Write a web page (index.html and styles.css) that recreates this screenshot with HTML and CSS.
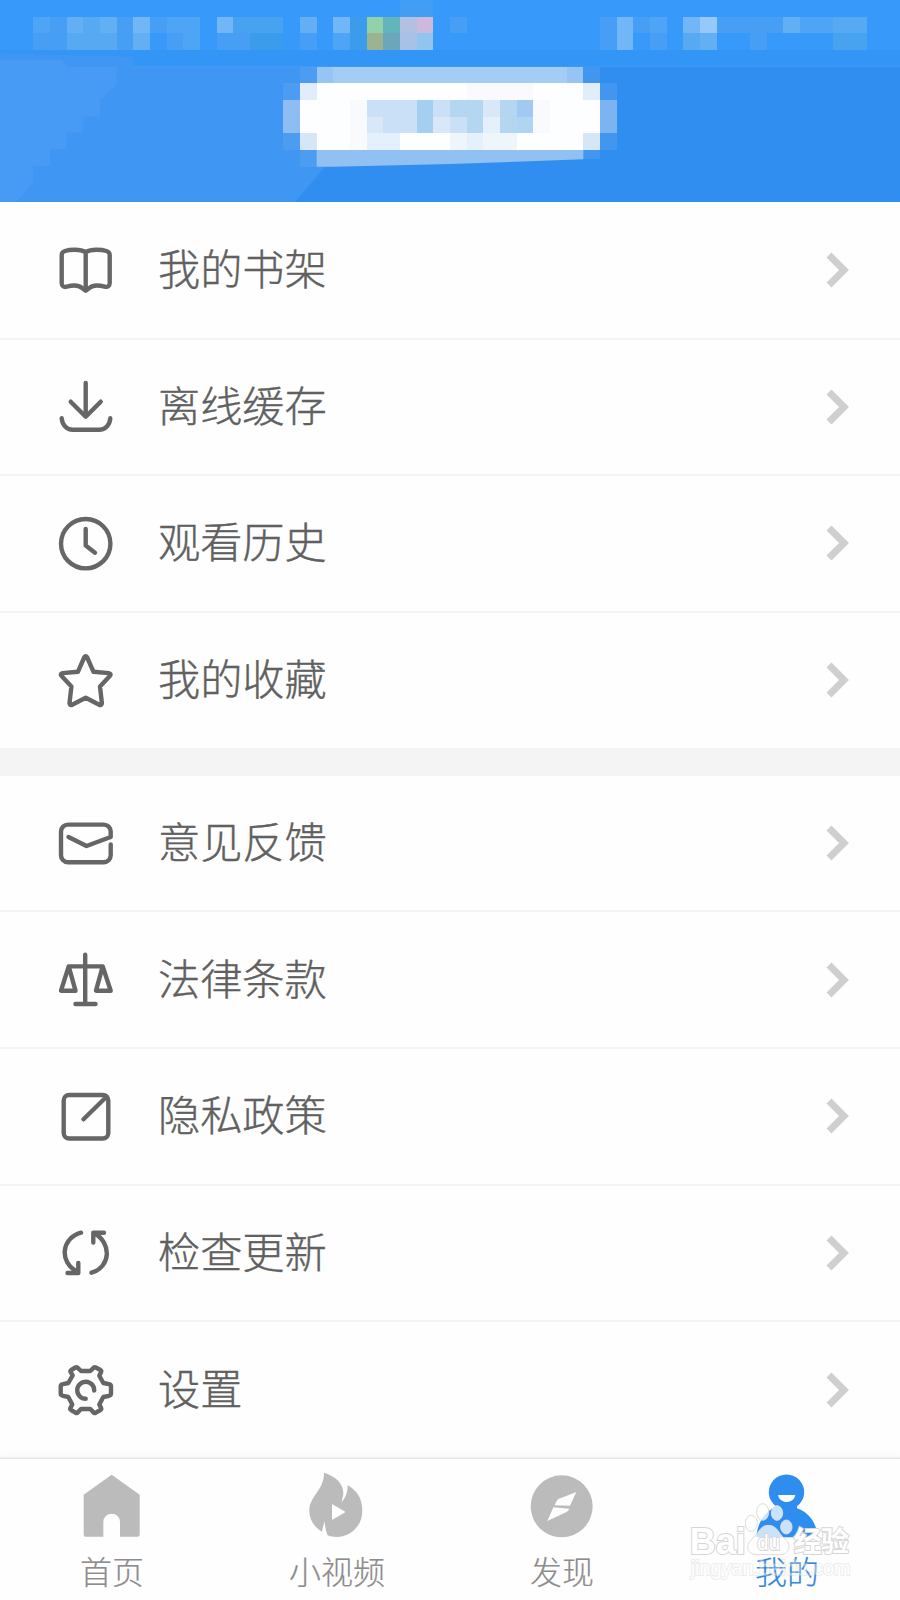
FILE: index.html
```
<!DOCTYPE html>
<html lang="zh-CN">
  <head>
    <meta charset="UTF-8" />
    <title>我的</title>
    <meta name="viewport" content="width=device-width, initial-scale=1.0" />
    <link rel="stylesheet" href="styles.css">
  </head>
  <body>
    <header class="header">
      <svg class="banner" viewBox="0 0 2700 606" preserveAspectRatio="none">
        <!-- background -->
        <path fill="#3799f9" d="M0 0h2700v200H0z" />
        <path fill="#3395f6" d="M0 150h2700v50H0z" />
        <path fill="#308ef1" d="M1000 200h1700v406H885z" />
        <path fill="#3f97f3" d="M0 160l400 10v30h600v270l-25 30-90 106H0z" />
        <path fill="#479bf4" d="M0 180h185l15 20h150v55l-50 45v50h-50v48h-50v50h-50v50h-50v45L50 606H0z" />
        <!-- status bar blocks -->
        <g shape-rendering="crispEdges">
          <path fill="#4fa5f5" d="M100 50h50v50h-50zM500 50h100v50h-100zM550 100h50v50h-50zM1000 100h50v50h-50zM1950 50h50v50h-50zM2350 50h150v50h-150z" />
          <path fill="#469ff5" d="M150 50h50v100h-100v-50h50zM350 50h50v100h-50zM450 50h50v50h50v50h-50v-50h-50zM650 100h100v50h-100zM900 100h50v50h-50zM1350 50h50v50h-50zM1800 50h50v100h-50zM1900 50h50v50h-50zM1950 100h50v50h-50zM2150 50h200v50h-200zM2250 100h50v50h-50z" />
          <path fill="#62b0f3" d="M200 50h50v50h-50zM300 50h50v50h-50zM900 50h50v50h-50zM400 100h50v50h-50zM2100 100h50v50h-50zM2350 50h50v50h-50z" />
          <path fill="#57a9f1" d="M250 50h50v50h50v50h-150v-50h50zM2050 100h50v50h-50zM2500 50h100v50h-100z" />
          <path fill="#71b7f7" d="M400 50h50v50h-50zM650 50h50v50h-50zM1000 50h50v50h-50zM1850 50h50v100h-50zM2050 50h50v50h-50z" />
          <path fill="#47a3ef" d="M700 50h150v50h-150zM2500 100h100v50h-100z" />
          <path fill="#3a9ceb" d="M750 100h100v50h-100zM1050 50h50v100h-50z" />
          <path fill="#96c9f9" d="M2100 50h50v50h-50z" />
          <path fill="#92d1aa" d="M1100 50h50v50h-50z" />
          <path fill="#9bb391" d="M1100 100h50v50h-50z" />
          <path fill="#63b5bc" d="M1150 50h50v50h-50z" />
          <path fill="#6ba6bb" d="M1150 100h50v50h-50z" />
          <path fill="#b4c0e0" d="M1200 50h50v50h-50z" />
          <path fill="#cdb9dc" d="M1250 50h50v50h-50z" />
          <path fill="#a9c1e7" d="M1200 100h50v50h-50z" />
          <path fill="#90c6ed" d="M1250 100h50v50h-50z" />
          <path fill="#429df4" d="M1200 0h100v50h-100z" />
        </g>
        <!-- account button -->
        <g shape-rendering="crispEdges">
          <path fill="#4c9df2" d="M900 200h50v50h-50zM850 250h50v50h-50zM850 400h50v50h50v50h-50v-50h-50z" />
          <path fill="#4296f0" d="M1750 200h50v50h50v50h-50v-50h-50zM1800 400h50v50h-50zM1750 450h50v27h-50z" />
          <path fill="#a4cdf6" d="M950 200h800v50h-800z" />
          <path fill="#96c5f5" d="M950 200h50v50h-50zM1700 200h50v50h-50z" />
        </g>
        <path fill="#91c1f3" d="M950 450h800v28l-400 14-350 8h-50z" />
        <g shape-rendering="crispEdges">
          <path fill="#fdfeff" d="M900 250h900v200H900z" />
          <path fill="#8dbdf3" d="M850 300h50v100h-50z" />
          <path fill="#7cb4f2" d="M1800 300h50v100h-50z" />
          <path fill="#e1edfa" d="M900 250h50v50h-50zM1750 250h50v50h-50z" />
          <path fill="#d5e6f6" d="M900 400h50v50h-50zM1750 400h50v50h-50z" />
          <path fill="#c9e0f7" d="M1100 300h150v100h-150zM1300 300h50v50h-50zM1350 350h50v50h-50z" />
          <path fill="#d8e8f8" d="M1100 350h50v50h-50zM1300 350h50v50h-50zM1450 300h50v50h-50z" />
          <path fill="#a4cff0" d="M1250 300h50v100h-50z" />
          <path fill="#b4d6f1" d="M1350 300h100v100h-50v-50h-50zM1500 300h50v100h-50z" />
          <path fill="#a1caf2" d="M1550 300h50v50h-50z" />
          <path fill="#b0d4f2" d="M1550 350h50v50h-50z" />
          <path fill="#e4f0fb" d="M1100 400h100v50h-100zM1400 400h50v50h-50zM1450 350h50v50h-50z" />
          <path fill="#eef5fb" d="M1350 400h50v50h-50zM1450 400h100v50h-100z" />
          <path fill="#f8fafd" d="M1600 300h50v100h-50zM1400 250h200v50h-200zM1050 300h50v150h-50z" />
        </g>
      </svg>
    </header>

    <main class="menu">
      <section class="group">
        <a class="row">
          <svg class="icon" viewBox="0 0 56 56">
            <path d="M27.700 9C22 6 12 6.500 7 8c-2 .6-3.300 2-3.300 4v28c0 3 2 4.500 5 3.700 6-1.700 12-1.500 15 1l4 3 4-3c3-2.500 9-2.700 15-1 3 .8 5-.7 5-3.700V12c0-2-1.300-3.400-3.300-4-5-1.500-15-2-20.700 1zV46" />
          </svg>
          <span class="label">我的书架</span>
          <svg class="arrow" viewBox="0 0 24 36"><path d="M4 3l15 15L4 33" /></svg>
        </a>
        <a class="row">
          <svg class="icon" viewBox="0 0 56 56">
            <path d="M27.700 4v33.500M12.700 22.700l15 15 15-15M3.700 39.300c.5 6.500 5 11.400 11 11.400h26.600c6 0 10.500-4.900 11-11.400" />
          </svg>
          <span class="label">离线缓存</span>
          <svg class="arrow" viewBox="0 0 24 36"><path d="M4 3l15 15L4 33" /></svg>
        </a>
        <a class="row">
          <svg class="icon" viewBox="0 0 56 56">
            <circle cx="27.7" cy="27.7" r="24.7" />
            <path d="M27.700 13v16.500l9.300 7.200" />
          </svg>
          <span class="label">观看历史</span>
          <svg class="arrow" viewBox="0 0 24 36"><path d="M4 3l15 15L4 33" /></svg>
        </a>
        <a class="row">
          <svg class="icon" viewBox="0 0 56 56">
            <path d="M26.200 4.500q1.500-2.500 3 0l6.300 14.300 15.300 1.300q3 .6 1 3L42 33.400l1.900 16.800q-.3 2.300-2.700 1.600L27.700 44.800l-13.500 7q-2.400.7-2.700-1.600l1.900-16.800-9.800-10.300q-2-2.400 1-3l15.300-1.300z" />
          </svg>
          <span class="label">我的收藏</span>
          <svg class="arrow" viewBox="0 0 24 36"><path d="M4 3l15 15L4 33" /></svg>
        </a>
      </section>

      <section class="group">
        <a class="row">
          <svg class="icon" viewBox="0 0 56 56">
            <path d="M10.500 21l18 9 24.200-9v-5.400a7 7 0 0 0-7-7H10a7 7 0 0 0-7 7v23.700a7 7 0 0 0 7 7h35.700a7 7 0 0 0 7-7V28.500" />
          </svg>
          <span class="label">意见反馈</span>
          <svg class="arrow" viewBox="0 0 24 36"><path d="M4 3l15 15L4 33" /></svg>
        </a>
        <a class="row">
          <svg class="icon" viewBox="0 0 56 56">
            <path d="M27.200 2.700V52M17.500 52h20M10.700 14.400h34M10.700 14.400L3 38.700h14.500zM44.700 14.400L38 38.700h14.700z" />
          </svg>
          <span class="label">法律条款</span>
          <svg class="arrow" viewBox="0 0 24 36"><path d="M4 3l15 15L4 33" /></svg>
        </a>
        <a class="row">
          <svg class="icon" viewBox="0 0 56 56">
            <rect x="5.700" y="6" width="44.600" height="43.500" rx="5.500" />
            <path d="M25.500 30.300L48.500 7.800" />
          </svg>
          <span class="label">隐私政策</span>
          <svg class="arrow" viewBox="0 0 24 36"><path d="M4 3l15 15L4 33" /></svg>
        </a>
        <a class="row">
          <svg class="icon" viewBox="0 0 56 56">
            <path d="M23 7.700C3.500 13 .5 37 19.500 47M9.500 48h10.800V38M33.500 47.700C53 42 54 18 36 8M46 7.700H35.300V17.500" />
          </svg>
          <span class="label">检查更新</span>
          <svg class="arrow" viewBox="0 0 24 36"><path d="M4 3l15 15L4 33" /></svg>
        </a>
        <a class="row">
          <svg class="icon" viewBox="0 0 56 56">
            <path d="M5 22.200l5.300-1.200 4.400-7.600-2-3.200q-.7-1.400.5-2.200l4.300-2.500q1.500-.8 2.500.6L23 9h9.300l3-2.900q1-1.400 2.500-.6L42.500 8q1.200.8.500 2.200l-1.700 3.500 4 7.300 5.700 1.200q2 .4 2 2.300v7.100q0 1.800-2 2.200L45.300 35l-4 7.500 1.700 3.300q.7 1.400-.5 2.200l-4.700 2.700q-1.500.8-2.500-.6L32.300 47H23l-3 3.100q-1 1.400-2.500.6L13 48q-1.200-.8-.5-2.200l1.800-3.300-4-7.500L5 33.800q-2.300-.4-2.300-2.200v-7.100q0-1.900 2.300-2.300z" />
            <path d="M36.200 28.500a8.500 8.500 0 1 0-8.500 8.200" />
          </svg>
          <span class="label">设置</span>
          <svg class="arrow" viewBox="0 0 24 36"><path d="M4 3l15 15L4 33" /></svg>
        </a>
      </section>
    </main>

    <nav class="tabs">
      <a class="tab">
        <svg class="tab-icon" viewBox="0 0 210 210">
          <path d="M104 14l84 60v120q0 6-6 6h-53v-44a25 25 0 0 0-50 0v44H26q-6 0-6-6V74z" />
        </svg>
        <span>首页</span>
      </a>
      <a class="tab">
        <svg class="tab-icon" viewBox="0 0 210 210">
          <path fill-rule="evenodd" d="M66 8c36 12 59 33 58 63-1 10-4 15-5 25 12-14 18-28 18-50 28 15 44 40 44 76 0 45-34 79-78 79-10 0-18-2-26-5-5-12-8-25-9-42-4 12-6 20-8 31-22-13-38-34-38-63 0-44 45-61 44-114zM90 102v48l41-24z" />
        </svg>
        <span>小视频</span>
      </a>
      <a class="tab">
        <svg class="tab-icon" viewBox="0 0 210 210">
          <circle cx="104" cy="109" r="93" />
          <path class="cut" d="M148 66L94 87q-7 5-11 19l46 1zM79 112l48 4q-4 9-10 11l-56 26z" />
        </svg>
        <span>发现</span>
      </a>
      <a class="tab active">
        <svg class="tab-icon" viewBox="0 0 210 210">
          <path d="M13 202c3-45 25-75 59-93a53 53 0 1 1 63 0v6c35 12 59 42 62 87z" />
          <path class="cut" d="M78 75h52c-5 28-47 28-52 0z" />
        </svg>
        <span>我的</span>
      </a>
    </nav>

    <svg class="watermark" viewBox="705 174 516 270">
      <g class="paw">
        <ellipse cx="904" cy="250" rx="18" ry="24" />
        <ellipse cx="938" cy="216" rx="18" ry="25" />
        <ellipse cx="981" cy="219" rx="17" ry="22" />
        <ellipse cx="1009" cy="261" rx="17" ry="21" />
        <path d="M955 256c27 0 30 25 50 41 22 18 12 47-16 47h-68c-30 0-37-29-15-46 21-16 22-42 49-42z" />
      </g>
      <g class="mark">
        <text class="brand" x="719" y="343" textLength="168" lengthAdjust="spacingAndGlyphs">Bai</text>
        <text class="du" x="922" y="331" textLength="68" lengthAdjust="spacingAndGlyphs">du</text>
        <text class="cn" x="1031" y="336" textLength="166">经验</text>
        <text class="site" x="722" y="405" textLength="480" lengthAdjust="spacingAndGlyphs">jingyan.baidu.com</text>
      </g>
    </svg>
  </body>
</html>
```
FILE: styles.css
```
* {
  box-sizing: border-box;
}
body {
  margin: 0;
  width: 900px;
  height: 1600px;
  position: relative;
  display: flex;
  flex-direction: column;
  overflow: hidden;
  background: #fefefe;
  font-family: "Noto Sans CJK SC", sans-serif;
  font-weight: 300;
}

.header {
  height: 203px;
}
.banner {
  display: block;
  width: 900px;
  height: 202px;
}

.menu {
  flex: 1;
  background: #f4f4f4;
}
.group {
  background: #fefefe;
}
.group + .group {
  margin-top: 28px;
}
.row {
  display: flex;
  align-items: center;
  height: 136.6px;
  padding: 1px 51px 0 58px;
  border-bottom: 2px solid #f4f4f4;
}
.group .row:last-child {
  border-bottom: none;
  height: 135px;
}
.icon {
  width: 56px;
  height: 56px;
  fill: none;
  stroke: #666;
  stroke-width: 4.4;
  stroke-linecap: round;
  stroke-linejoin: round;
}
.label {
  flex: 1;
  margin: -7px 0 0 44px;
  color: #606060;
  font-size: 42.2px;
  line-height: 60px;
  -webkit-text-stroke: 0.4px #606060;
}
.arrow {
  width: 24px;
  height: 36px;
  margin-bottom: 1px;
  fill: none;
  stroke: #cfcfcf;
  stroke-width: 7;
}

.tabs {
  display: flex;
  height: 142px;
  border-top: 1px solid #e6e6e6;
  background: #fefefe;
  box-shadow: 0 -2px 8px rgba(0, 0, 0, 0.04);
}
.tab {
  flex: 1;
  display: flex;
  flex-direction: column;
  align-items: center;
  padding: 11px 1px 0 0;
  color: #8c8c8c;
  font-size: 32px;
  line-height: 46px;
  -webkit-text-stroke: 0.2px currentColor;
}
.tab-icon {
  width: 70px;
  height: 70px;
  margin-bottom: 7px;
  fill: #bbb;
}
.tab .cut {
  fill: #fefefe;
}
.tab.active {
  color: #2f87d8;
}
.tab.active .tab-icon {
  fill: #2e8ef0;
}

/* sits on top of the last tab */
.watermark {
  position: absolute;
  left: 685px;
  top: 1498px;
  width: 172px;
  height: 90px;
}
.paw {
  fill: rgba(255, 255, 255, 0.75);
  stroke: #dcdcdc;
  stroke-width: 3;
}
.mark {
  fill: #fff;
  stroke: #d6d6d6;
  stroke-width: 6;
  paint-order: stroke;
  font-family: "Liberation Sans", "Noto Sans CJK SC", sans-serif;
}
.brand {
  font-size: 108px;
  font-weight: 700;
}
.du {
  font-size: 66px;
}
.cn {
  font-size: 84px;
  font-weight: 700;
}
.site {
  font-size: 58px;
  opacity: 0.4;
}
```
